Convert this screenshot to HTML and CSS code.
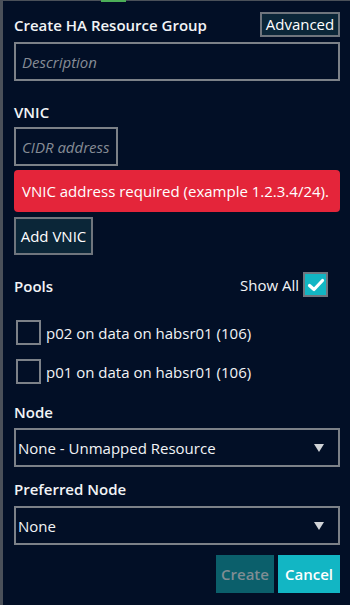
FILE: index.html
```html
<!DOCTYPE html>
<html>
<head>
<meta charset="utf-8">
<link rel="stylesheet" href="styles.css">
</head>
<body>
<div class="panel">
  <div class="tab-indicator"></div>
  <div class="title-row">
    <div class="title">Create HA Resource Group</div>
    <button class="btn btn-dark btn-adv">Advanced</button>
  </div>
  <div class="input input-desc"><span class="placeholder">Description</span></div>

  <div class="label label-vnic">VNIC</div>
  <div class="input input-cidr"><span class="placeholder">CIDR address</span></div>
  <div class="alert">VNIC address required (example 1.2.3.4/24).</div>
  <button class="btn btn-dark btn-add">Add VNIC</button>

  <div class="pools-row">
    <div class="label">Pools</div>
    <div class="show-all">
      <span>Show All</span>
      <span class="check checked">
        <svg width="18" height="14" viewBox="0 0 18 14"><path d="M2.5 7.5 L7 11.5 L15.5 2.5" fill="none" stroke="#ffffff" stroke-width="3.2" stroke-linecap="round" stroke-linejoin="round"/></svg>
      </span>
    </div>
  </div>

  <div class="pool pool-first"><span class="check"></span><span>p02 on data on habsr01 (106)</span></div>
  <div class="pool"><span class="check"></span><span>p01 on data on habsr01 (106)</span></div>

  <div class="label label-node">Node</div>
  <div class="select"><span>None - Unmapped Resource</span><span class="arrow"></span></div>

  <div class="label label-pref">Preferred Node</div>
  <div class="select"><span>None</span><span class="arrow"></span></div>

  <div class="actions">
    <button class="btn btn-create">Create</button>
    <button class="btn btn-cancel">Cancel</button>
  </div>
</div>
</body>
</html>
```

FILE: styles.css
```css
html, body {
  margin: 0;
  padding: 0;
  background: #020f26;
}
body {
  font-family: "Open Sans", "Noto Sans", sans-serif;
  font-size: 15px;
  color: #f2f4f6;
}
.panel {
  position: relative;
  width: 350px;
  height: 605px;
  box-sizing: border-box;
  border-left: 3px solid #4a5059;
  border-top: 1px solid #4a5059;
  padding: 11px 10px 0 11px;
  display: flex;
  flex-direction: column;
}
.tab-indicator {
  position: absolute;
  top: -1px;
  left: 98px;
  width: 25px;
  height: 2px;
  background: #4cae58;
}
.title-row {
  display: flex;
  justify-content: space-between;
  align-items: center;
  height: 25px;
}
.title {
  font-weight: 600;
  font-size: 15px;
  line-height: 20px;
  padding-top: 1px;
}
.btn {
  font-family: "Open Sans", "Noto Sans", sans-serif;
  font-size: 15px;
  color: #ffffff;
  box-sizing: border-box;
  padding: 0;
  margin: 0;
  cursor: pointer;
}
.btn-dark {
  background: #0b2638;
  border: 2px solid #6f757d;
}
.btn-adv {
  width: 80px;
  height: 25px;
  line-height: 19px;
  margin-right: 0;
}
.input {
  box-sizing: border-box;
  height: 39px;
  border: 2px solid #7c8188;
  display: flex;
  align-items: center;
  padding-left: 6px;
}
.input-desc {
  margin-top: 5px;
}
.placeholder {
  font-style: italic;
  color: #868c95;
}
.label {
  font-weight: 600;
  line-height: 20px;
}
.label-vnic {
  margin-top: 21px;
}
.input-cidr {
  margin-top: 5px;
  width: 104px;
}
.alert {
  margin-top: 4px;
  height: 42px;
  box-sizing: border-box;
  background: #e4253a;
  border-radius: 4px;
  display: flex;
  align-items: center;
  padding-left: 8px;
  color: #ffffff;
}
.btn-add {
  margin-top: 5px;
  width: 79px;
  height: 38px;
  align-self: flex-start;
}
.pools-row {
  margin-top: 17px;
  height: 25px;
  display: flex;
  justify-content: space-between;
  align-items: center;
}
.pools-row .label {
  padding-top: 3px;
}
.show-all {
  display: flex;
  align-items: center;
  gap: 4px;
  margin-right: 12px;
}
.check {
  box-sizing: border-box;
  width: 25px;
  height: 25px;
  border: 2px solid #7c8188;
  display: inline-flex;
  align-items: center;
  justify-content: center;
  flex: none;
}
.check.checked {
  background: #12b6c4;
  border-color: #6f7780;
}
.pool {
  display: flex;
  align-items: center;
  gap: 5px;
  height: 25px;
  margin-top: 14px;
  padding-left: 2px;
}
.pool-first {
  margin-top: 23px;
}
.label-node {
  margin-top: 18px;
}
.label-pref {
  margin-top: 12px;
}
.select {
  box-sizing: border-box;
  height: 39px;
  border: 2px solid #7c8188;
  display: flex;
  align-items: center;
  justify-content: space-between;
  padding-left: 2px;
  padding-right: 14px;
  margin-top: 6px;
}
.label-pref + .select {
  margin-top: 7px;
}
.arrow {
  width: 0;
  height: 0;
  border-left: 5px solid transparent;
  border-right: 5px solid transparent;
  border-top: 8px solid #d0d3d7;
}
.actions {
  margin-top: 10px;
  display: flex;
  justify-content: flex-end;
  gap: 4px;
}
.btn-create {
  width: 58px;
  height: 38px;
  background: #0b5f6b;
  border: none;
  color: #7f8d93;
  font-weight: 600;
}
.btn-cancel {
  width: 62px;
  height: 38px;
  background: #12b6c4;
  border: none;
  color: #ffffff;
  font-weight: 600;
}
```
